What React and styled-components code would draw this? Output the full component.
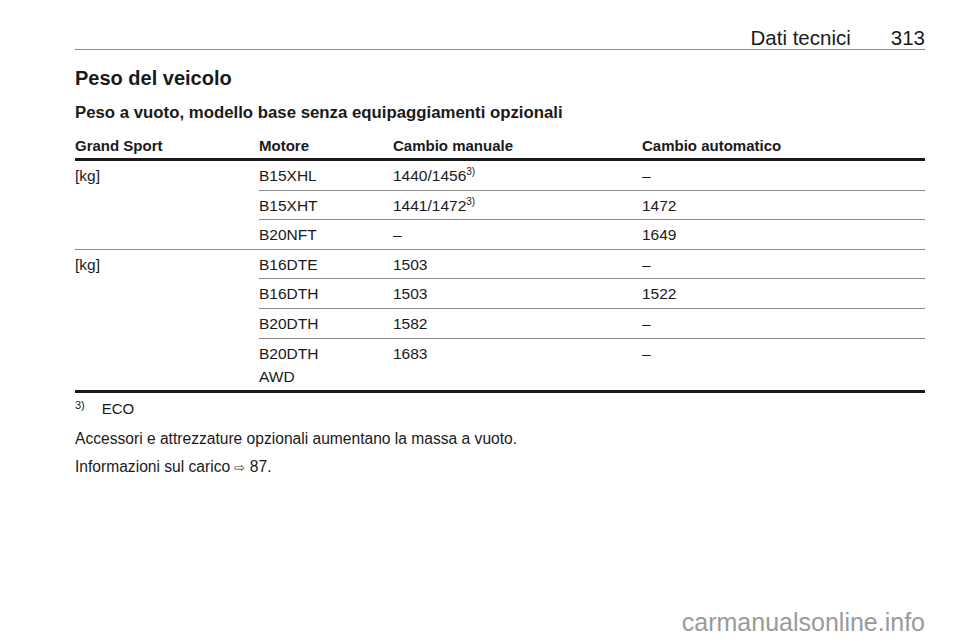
import styled, { createGlobalStyle } from "styled-components";

const GlobalStyle = createGlobalStyle`
  body {
    margin: 0;
    background: #fff;
    font-family: "Liberation Sans", Arial, sans-serif;
    color: #1a1a1a;
  }
`;

const Page = styled.div`
  width: 960px;
  height: 642px;
  padding: 0 35px 0 75px;
  box-sizing: border-box;
  display: flex;
  flex-direction: column;
`;

const RunningHead = styled.header`
  height: 50px;
  display: flex;
  justify-content: flex-end;
  align-items: flex-end;
  gap: 40px;
  box-sizing: border-box;
  border-bottom: 1.5px solid #8a8a8a;
  font-size: 20.5px;
  line-height: 22px;
`;

const Title = styled.h1`
  margin: 16px 0 0;
  font-size: 20px;
  line-height: 24px;
  font-weight: bold;
`;

const Subtitle = styled.h2`
  margin: 13px 0 0;
  font-size: 16.8px;
  line-height: 20px;
  font-weight: bold;
`;

const Table = styled.table`
  margin-top: 14px;
  width: 100%;
  border-collapse: collapse;
  font-size: 15.5px;
  border-bottom: 3px solid #1a1a1a;
`;

const Th = styled.th`
  text-align: left;
  font-size: 15px;
  font-weight: bold;
  padding: 0 0 3px;
  height: 18px;
  line-height: 18px;
  width: ${(p) => p.$w || "auto"};
  border-bottom: 3px solid #1a1a1a;
`;

const Td = styled.td`
  vertical-align: top;
  padding: 6px 0 ${(p) => (p.$last ? "5px" : "0")};
  height: 22.6px;
  line-height: 17px;
  border-bottom: ${(p) => (p.$last ? "none" : "1.5px solid #8a8a8a")};
`;

const SecondLine = styled.span`
  display: block;
  margin-top: 6px;
`;

const Sup = styled.sup`
  font-size: 10px;
  line-height: 0;
  vertical-align: 6px;
`;

const Footnote = styled.div`
  margin-top: 7px;
  font-size: 15px;
  line-height: 18px;
  display: flex;
  gap: 17px;
  align-items: baseline;
`;

const Marker = styled.span`
  font-size: 11px;
  position: relative;
  top: -5px;
`;

const Para = styled.p`
  margin: ${(p) => p.$mt || "0"} 0 0;
  font-size: 15.6px;
  line-height: 20px;
`;

const Arrow = styled.span`
  font-size: 13px;
  color: #444;
`;

const Watermark = styled.div`
  margin-top: auto;
  margin-bottom: 6px;
  align-self: flex-end;
  font-size: 25px;
  line-height: 28px;
  color: #9a9a9a;
`;

const groups = [
  {
    unit: "[kg]",
    rows: [
      ["B15XHL", "1440/1456", "–", true],
      ["B15XHT", "1441/1472", "1472", true],
      ["B20NFT", "–", "1649", false],
    ],
  },
  {
    unit: "[kg]",
    rows: [
      ["B16DTE", "1503", "–", false],
      ["B16DTH", "1503", "1522", false],
      ["B20DTH", "1582", "–", false],
      [["B20DTH", "AWD"], "1683", "–", false],
    ],
  },
];

const App = () => {
  return (
    <>
      <GlobalStyle />
      <Page>
        <RunningHead>
          <span>Dati tecnici</span>
          <span>313</span>
        </RunningHead>
        <Title>Peso del veicolo</Title>
        <Subtitle>Peso a vuoto, modello base senza equipaggiamenti opzionali</Subtitle>
        <Table>
          <thead>
            <tr>
              <Th $w="184px">Grand Sport</Th>
              <Th $w="134px">Motore</Th>
              <Th $w="249px">Cambio manuale</Th>
              <Th>Cambio automatico</Th>
            </tr>
          </thead>
          <tbody>
            {groups.map((g, gi) =>
              g.rows.map((r, ri) => {
                const last = gi === groups.length - 1 && ri === g.rows.length - 1;
                return (
                  <tr key={gi + "-" + ri}>
                    {ri === 0 && (
                      <Td rowSpan={g.rows.length} $last={gi === groups.length - 1}>
                        {g.unit}
                      </Td>
                    )}
                    <Td $last={last}>
                      {Array.isArray(r[0]) ? (
                        <>
                          {r[0][0]}
                          <SecondLine>{r[0][1]}</SecondLine>
                        </>
                      ) : (
                        r[0]
                      )}
                    </Td>
                    <Td $last={last}>
                      {r[1]}
                      {r[3] && <Sup>3)</Sup>}
                    </Td>
                    <Td $last={last}>{r[2]}</Td>
                  </tr>
                );
              })
            )}
          </tbody>
        </Table>
        <Footnote>
          <Marker>3)</Marker>
          <span>ECO</span>
        </Footnote>
        <Para $mt="10px">Accessori e attrezzature opzionali aumentano la massa a vuoto.</Para>
        <Para $mt="8px">
          Informazioni sul carico <Arrow>⇨</Arrow> 87.
        </Para>
        <Watermark>carmanualsonline.info</Watermark>
      </Page>
    </>
  );
};

export default App;
